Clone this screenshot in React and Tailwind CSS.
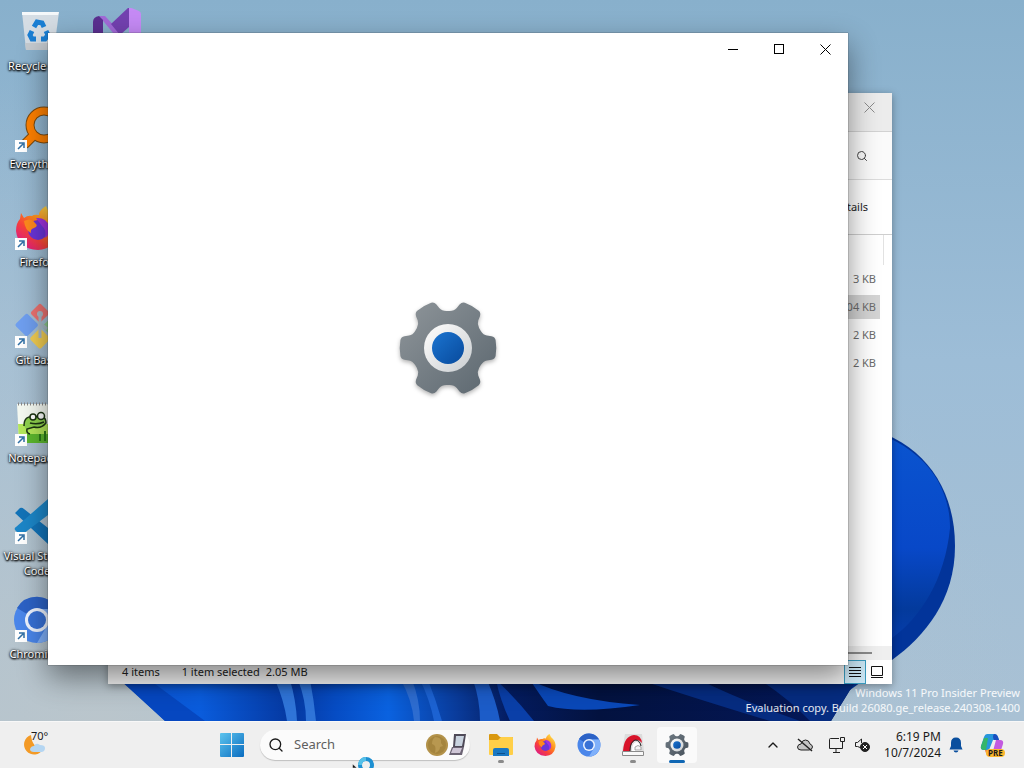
import React from 'react';
import { Search, ChevronUp } from 'lucide-react';

const TOOTH = 'M0 0 L29 -23.7 L32.5 -17.6 Q35 -13.2 39 -12.4 L43.5 -11.8 Q47 -11 47.6 -8 Q49 0 47.6 8 Q47 11 43.5 11.8 L39 12.4 Q35 13.2 32.5 17.6 L29 23.7 Z';

const GearIcon = ({ id, className, dark }) => (
    <svg viewBox="-50 -50 100 100" className={className} aria-hidden="true">
        <defs>
            <linearGradient id={`${id}-body`} x1="0" y1="0" x2="1" y2="1">
                <stop offset="0.1" stopColor={dark ? '#6d7881' : '#8b9297'} />
                <stop offset="0.9" stopColor={dark ? '#4a545e' : '#5f6a72'} />
            </linearGradient>
            <linearGradient id={`${id}-ring`} x1="0" y1="0" x2="1" y2="1">
                <stop offset="0.2" stopColor="#f5f5f5" />
                <stop offset="1" stopColor="#c9cdd0" />
            </linearGradient>
            <linearGradient id={`${id}-dot`} x1="0" y1="0" x2="1" y2="1">
                <stop offset="0" stopColor="#1b74d0" />
                <stop offset="1" stopColor="#084a9c" />
            </linearGradient>
            <clipPath id={`${id}-clip`}>
                {[0, 60, 120, 180, 240, 300].map((angle) => (
                    <path key={angle} d={TOOTH} transform={`rotate(${angle})`} />
                ))}
            </clipPath>
        </defs>
        <rect x="-50" y="-50" width="100" height="100" fill={`url(#${id}-body)`} clipPath={`url(#${id}-clip)`} />
        <circle r={dark ? 27 : 24} fill={`url(#${id}-ring)`} />
        <circle r="16" fill={`url(#${id}-dot)`} />
    </svg>
);

const FirefoxIcon = ({ id, className }) => (
    <svg viewBox="0 0 48 48" className={className} aria-hidden="true">
        <defs>
            <linearGradient id={`${id}-fire`} x1="0.9" y1="0.1" x2="0.2" y2="0.9">
                <stop offset="0" stopColor="#ffe14a" />
                <stop offset="0.4" stopColor="#ff8a1c" />
                <stop offset="0.7" stopColor="#f9423a" />
                <stop offset="1" stopColor="#e01f7c" />
            </linearGradient>
        </defs>
        <path
            d="M8 9 L11 14 Q15 11 19 12 Q21 10 26 11 Q26 6 33 2 Q35 8 40 12 Q46 19 45 28 Q42 45 25 46 Q5 45 3 27 Q3 19 7 15 Z"
            fill={`url(#${id}-fire)`}
        />
        <circle cx="25" cy="26" r="10" fill="#6a35d9" />
        <path d="M11 17 Q18 13 22 19 Q26 22 21 24 Q17 25 18 29 Q12 26 11 17" fill="#ff8a1c" />
        <path d="M23 14 Q33 13 36 22 Q38 30 32 34 Q34 26 29 22 Z" fill="#a032e1" />
    </svg>
);

const ChromiumIcon = ({ className }) => (
    <svg viewBox="0 0 48 48" className={className} aria-hidden="true">
        <circle cx="24" cy="24" r="23" fill="#4a86ea" />
        <path d="M24 24 L4 12 A23 23 0 0 1 44 13 H24 Z" fill="#2c62c6" />
        <path d="M24 13 H44 A23 23 0 0 1 24 47 L34 30 Z" fill="#7fb0fa" />
        <circle cx="24" cy="24" r="12" fill="#eef4ff" />
        <circle cx="24" cy="24" r="9" fill="#3871d6" />
    </svg>
);

const RecycleBinIcon = () => (
    <svg viewBox="0 0 48 48" className="h-12 w-12" aria-hidden="true">
        <path d="M9 4 H46 L41 42 H13 Z" fill="#d5dde4" />
        <path d="M9 4 H46 L45 7 H9 Z" fill="#f5f8fa" />
        <path d="M12 35 H42 L41 42 H13 Z" fill="#c6cbd0" />
        <g fill="none" stroke="#1a7fd4" strokeWidth="5">
            <path d="M21 19 L24 14 L29 15 L31 19" />
            <path d="M33 23 L35 27 L32 31 H28" />
            <path d="M23 31 H19 L17 27 L19 23" />
        </g>
    </svg>
);

const EverythingIcon = () => (
    <svg viewBox="0 0 48 48" className="h-12 w-12" aria-hidden="true">
        <g fill="none" strokeLinecap="round">
            <circle cx="31" cy="19" r="14" stroke="#7a4a10" strokeWidth="9" />
            <path d="M20 30 L12 38" stroke="#7a4a10" strokeWidth="10" />
            <circle cx="31" cy="19" r="14" stroke="#ff8000" strokeWidth="7" />
            <path d="M20 30 L12 38" stroke="#ff8000" strokeWidth="8" />
        </g>
    </svg>
);

const GitIcon = () => (
    <svg viewBox="0 0 48 48" className="h-12 w-12" aria-hidden="true">
        <rect x="5" y="14" width="17" height="17" rx="2" fill="#6f9ff0" transform="rotate(45 13 23)" />
        <rect x="20" y="4" width="14" height="14" rx="2" fill="#ec7270" transform="rotate(45 27 11)" />
        <rect x="20" y="29" width="15" height="15" rx="2" fill="#f1cd52" transform="rotate(45 27 36)" />
        <rect x="32" y="18" width="13" height="13" rx="2" fill="#8cc98c" transform="rotate(45 38 24)" />
        <circle cx="27" cy="12" r="3" fill="#a9b9c6" />
        <path d="M27 14 V36 M28 22 L34 27" stroke="#a9b9c6" strokeWidth="3" />
    </svg>
);

const NotepadIcon = () => (
    <svg viewBox="0 0 48 48" className="h-12 w-12" aria-hidden="true">
        <path d="M4 4 H34 L45 13 V42 H6 Z" fill="#f6faf2" />
        <path d="M5 24 H45 V43 H6 Z" fill="#b4e85a" />
        <path d="M5 34 H45 V43 H6 Z" fill="#5cb82e" />
        <path d="M5 4 H34" stroke="#888" strokeWidth="3" strokeDasharray="1 2" />
        <g fill="#8fd24e" stroke="#1c3312" strokeWidth="1.5">
            <path d="M11 26 Q11 15 21 17 Q33 14 33 23 Q28 29 21 27 L14 29 Q13 33 17 34" />
            <circle cx="20" cy="17" r="3" fill="#fff" />
            <circle cx="28" cy="16" r="3.5" fill="#fff" />
        </g>
        <path d="M17 23 Q24 25 31 22" stroke="#1c3312" strokeWidth="1.5" fill="none" />
        <path d="M27 41 V34 M32 41 V31 M38 41 V34" stroke="#2c7a1a" strokeWidth="2" />
    </svg>
);

const VsCodeIcon = () => (
    <svg viewBox="0 0 48 48" className="h-12 w-12" aria-hidden="true">
        <path d="M2 15 L7 10 Q9 9 11 11 L35 30 V46 Z" fill="#1273b8" />
        <path d="M35 1 V17 L10 36 Q8 37 6 36 L2 32 Q1 30 3 29 Z" fill="#1c86c8" />
        <path d="M35 1 L46 6 V42 L35 46 Z" fill="#3c9fe0" />
    </svg>
);

const VisualStudioIcon = () => (
    <svg viewBox="0 0 48 48" className="h-12 w-12" aria-hidden="true">
        <path d="M6 8 L12 8 L36 34 V44 Z" fill="#a26ad8" />
        <path d="M0 14 Q0 9 6 8 L10 12 V38 L0 34 Z" fill="#5b2f91" />
        <path d="M36 -1 L18 16 L27 27 L36 19 Z" fill="#7341b0" />
        <path d="M36 -1 L46 3 Q48 4 48 6 V42 L36 47 Z" fill="#c58af5" />
    </svg>
);

const DESKTOP_ICONS = [
    { label: 'Recycle Bin', icon: <RecycleBinIcon /> },
    { label: 'Everything', icon: <EverythingIcon />, shortcut: true },
    { label: 'Firefox', icon: <FirefoxIcon id="ff-desk" className="h-12 w-12" />, shortcut: true },
    { label: 'Git Bash', icon: <GitIcon />, shortcut: true },
    { label: 'Notepad++', icon: <NotepadIcon />, shortcut: true },
    { label: 'Visual Studio Code', icon: <VsCodeIcon />, shortcut: true },
    { label: 'Chromium', icon: <ChromiumIcon className="h-12 w-12" />, shortcut: true },
];

const FILE_SIZES = [
    { size: '3 KB' },
    { size: '2,104 KB', selected: true },
    { size: '2 KB' },
    { size: '2 KB' },
];

const Wallpaper = () => (
    <svg
        viewBox="0 0 1024 721"
        preserveAspectRatio="none"
        className="absolute inset-0 h-full w-full"
        aria-hidden="true"
    >
        <defs>
            <linearGradient id="sky" x1="0" y1="0" x2="0" y2="1">
                <stop offset="0" stopColor="#88b0cc" />
                <stop offset="0.5" stopColor="#9dbdd7" />
                <stop offset="1" stopColor="#a9c1d4" />
            </linearGradient>
            <radialGradient id="haze" cx="0.1" cy="1" r="0.9">
                <stop offset="0" stopColor="#bcc6cb" stopOpacity="0.9" />
                <stop offset="0.5" stopColor="#b9c6cd" stopOpacity="0.4" />
                <stop offset="1" stopColor="#b9c6cd" stopOpacity="0" />
            </radialGradient>
            <linearGradient id="petal" x1="0" y1="0" x2="0" y2="1">
                <stop offset="0" stopColor="#0a55d0" />
                <stop offset="0.5" stopColor="#0848c8" />
                <stop offset="0.75" stopColor="#033a9c" />
                <stop offset="1" stopColor="#0a40b8" />
            </linearGradient>
            <linearGradient id="ribbon" x1="0" y1="0" x2="1" y2="0">
                <stop offset="0" stopColor="#0a50d0" />
                <stop offset="0.12" stopColor="#0a5cdc" />
                <stop offset="0.24" stopColor="#0538a0" />
                <stop offset="0.3" stopColor="#064cc4" />
                <stop offset="0.37" stopColor="#0a62e0" />
                <stop offset="0.46" stopColor="#0a3c9c" />
                <stop offset="0.53" stopColor="#041c60" />
                <stop offset="0.65" stopColor="#03123f" />
                <stop offset="1" stopColor="#04185c" />
            </linearGradient>
        </defs>
        <rect width="1024" height="721" fill="url(#sky)" />
        <rect width="1024" height="721" fill="url(#haze)" />
        <path d="M850 424 C915 434 955 480 955 546 C955 600 925 636 892 660 L850 690 Z" fill="#02349a" />
        <path d="M850 426 C915 438 950 478 950 528 C945 580 920 618 892 638 L850 670 Z" fill="url(#petal)" />
        <path d="M110 670 H862 L831 721 H165 Z" fill="url(#ribbon)" />
        <path d="M120 680 L165 721 H205 L155 684 Z" fill="#0647c0" />
        <path d="M275 680 Q284 700 287 721 H297 Q296 700 290 680 Z" fill="#2f74d8" />
        <path d="M298 680 Q306 700 306 721 H316 Q314 700 310 680 Z" fill="#2f74d8" />
        <path d="M401 680 Q412 700 414 721 H420 Q420 700 412 680 Z" fill="#2d6cd0" />
        <path d="M420 680 Q430 700 434 721 H442 Q436 700 428 680 Z" fill="#1c62d2" />
        <path d="M473 680 Q480 700 480 721 H500 Q496 700 487 680 Z" fill="#1c5cc8" />
        <path d="M496 680 Q515 697 534 721 H510 Q500 700 496 680 Z" fill="#0a3fa8" />
        <path d="M530 680 Q570 700 640 705 Q580 714 548 706 Q540 695 530 680 Z" fill="#0a48b8" />
        <path d="M640 680 Q700 700 770 721 H800 Q740 700 700 680 Z" fill="#062c80" />
        <path d="M760 680 Q790 700 810 721 H831 L855 682 Z" fill="#062c80" />
    </svg>
);

const ShortcutArrow = () => (
    <svg viewBox="0 0 12 12" className="absolute bottom-0.5 left-0.5 h-3 w-3 bg-white" aria-hidden="true">
        <path d="M3 9 L8 4 M4 3 H9 V8" fill="none" stroke="#2f6fa5" strokeWidth="1.5" />
    </svg>
);

const DesktopIcon = ({ label, icon, shortcut }) => (
    <li className="flex h-[98px] w-[74px] flex-col items-center pt-2 text-center text-[11px] leading-[15px] text-white [text-shadow:0_1px_2px_#000,0_0_3px_#000,1px_1px_2px_#000]">
        <span className="relative mb-0.5">
            {icon}
            {shortcut && <ShortcutArrow />}
        </span>
        {label}
    </li>
);

const CloseGlyph = () => (
    <svg viewBox="0 0 11 11" className="h-[11px] w-[11px]" aria-hidden="true">
        <path d="M0.5 0.5 L10.5 10.5 M10.5 0.5 L0.5 10.5" stroke="currentColor" fill="none" />
    </svg>
);

const ExplorerWindow = () => (
    <section
        aria-label="File Explorer"
        className="absolute bottom-[37px] left-27 right-33 top-[93px] flex flex-col bg-white text-[11px] text-[#222] shadow-[0_2px_8px_rgba(0,0,0,0.35)]"
    >
        <header className="flex h-[39px] items-start justify-end border-b border-[#d2d2d2] bg-[#ececec]">
            <button aria-label="Close Explorer" className="flex h-7 w-[46px] items-center justify-center text-[#8a8a8a]">
                <CloseGlyph />
            </button>
        </header>
        <div className="flex h-12 items-center justify-end border-b border-[#dcdcdc] bg-[#fafafa] pr-6">
            <Search className="h-3 w-3 text-[#444]" strokeWidth={2} />
        </div>
        <div className="flex h-[55px] items-center justify-end border-b border-[#cfcfcf] pr-6">
            <button>Details</button>
        </div>
        <div className="min-h-0 flex-1 overflow-hidden">
            <div className="mr-2 h-[30px] border-r border-[#e2e2e2]" />
            <table className="w-full border-collapse text-right text-[#6b6b6b]">
                <tbody>
                    {FILE_SIZES.map((file, index) => (
                        <tr key={index} className="h-7">
                            <td className="py-0.5 pr-3">
                                <div className={`h-6 pr-1 leading-6 ${file.selected ? 'bg-[#d4d4d4]' : ''}`}>
                                    {file.size}
                                </div>
                            </td>
                        </tr>
                    ))}
                </tbody>
            </table>
        </div>
        <div className="flex h-[14px] items-center bg-[#efefef] pl-4 pr-5">
            <div className="h-0.5 flex-1 bg-[#8a8a8a]" />
        </div>
        <footer className="flex h-6 items-center bg-[#f3f3f3] pl-[14px]">
            <span>4 items</span>
            <span className="ml-[22px]">1 item selected</span>
            <span className="ml-1.5">2.05 MB</span>
            <button
                aria-label="Details view"
                className="ml-auto flex h-full w-[22px] items-center justify-center border border-[#3a9cc0] bg-[#cce8f6]"
            >
                <svg viewBox="0 0 12 12" className="h-3 w-3" aria-hidden="true">
                    <path d="M0 1.5 H12 M0 4.5 H12 M0 7.5 H12 M0 10.5 H12" stroke="#111" />
                </svg>
            </button>
            <button aria-label="Large icons view" className="flex h-full w-[26px] items-center justify-center bg-white pr-1">
                <svg viewBox="0 0 12 12" className="h-3 w-3" aria-hidden="true">
                    <path d="M0.5 0.5 H11.5 V9.5 H0.5 Z M0 11.5 H12" stroke="#111" fill="none" />
                </svg>
            </button>
        </footer>
    </section>
);

const SettingsWindow = () => (
    <section
        aria-label="Settings"
        className="absolute bottom-14 left-12 right-44 top-[33px] flex flex-col bg-white shadow-[0_0_1px_#333,0_12px_28px_rgba(0,0,0,0.45)]"
    >
        <header className="flex h-8 justify-end text-black">
            <button aria-label="Minimize" className="flex w-[46px] items-center justify-center">
                <span className="h-px w-2.5 bg-black" />
            </button>
            <button aria-label="Maximize" className="flex w-[46px] items-center justify-center">
                <span className="h-2.5 w-2.5 border border-black" />
            </button>
            <button aria-label="Close" className="flex w-[46px] items-center justify-center">
                <CloseGlyph />
            </button>
        </header>
        <div className="flex flex-1 items-center justify-center pb-[34px]">
            <GearIcon id="gear-splash" className="h-[100px] w-[100px] drop-shadow-[0_2px_2px_rgba(0,0,0,0.3)]" />
        </div>
    </section>
);

const WindowsLogo = () => (
    <svg viewBox="0 0 24 24" className="h-6 w-6" aria-hidden="true">
        <defs>
            <linearGradient id="win" x1="0" y1="0" x2="24" y2="24" gradientUnits="userSpaceOnUse">
                <stop offset="0" stopColor="#5cc4ee" />
                <stop offset="1" stopColor="#0a6cc0" />
            </linearGradient>
        </defs>
        <path d="M0 1 Q0 0 1 0 H11 V11 H0 Z M12 0 H23 Q24 0 24 1 V11 H12 Z M0 12 H11 V24 H1 Q0 24 0 23 Z M12 12 H24 V23 Q24 24 23 24 H12 Z" fill="url(#win)" />
    </svg>
);

const FolderIcon = () => (
    <svg viewBox="0 0 24 24" className="h-6 w-6" aria-hidden="true">
        <path d="M0 2 Q0 1 1 1 H8 L11 4 H23 Q24 4 24 5 V8 H0 Z" fill="#d9980f" />
        <path d="M0 7 H9 L12 4 H23 Q24 4 24 5 V21 Q24 22 23 22 H1 Q0 22 0 21 Z" fill="#ffcf48" />
        <path d="M4 23 V17 Q4 15 6 15 H18 Q20 15 20 17 V23 Z" fill="#1a78c2" />
        <path d="M8 20 H16 V21 H8 Z" fill="#0c4f8c" />
    </svg>
);

const RedToolIcon = () => (
    <svg viewBox="0 0 24 24" className="h-6 w-6" aria-hidden="true">
        <path d="M4 1 H21 L23 18 H1 Z" fill="#dcdcdc" />
        <path d="M1.5 18.5 H22.5 V22.5 H1.5 Z" fill="#f8f8f8" stroke="#8a8a8a" />
        <path d="M2 18 Q3 3 13 2 Q20 2 21 10 Q17 5 13 8 Q9 11 9 18 Z" fill="#d8132a" />
        <path d="M9 18 Q9 9 14 7 Q19 7 20 13" stroke="#222" strokeWidth="1" fill="none" />
        <path d="M11 18 Q11 10 15 9 Q18 9 19 13 L20 18 Z" fill="#fff" />
        <path d="M14 17 V14 Q17 11 20 14 V17 Z" fill="#f4f4f4" stroke="#888" strokeWidth="0.7" />
    </svg>
);

const WeatherIcon = () => (
    <svg viewBox="0 0 24 24" className="h-6 w-6" aria-hidden="true">
        <path d="M9 2 A10 10 0 1 0 21 16 Q10 15 9 2" fill="#f39a26" />
        <path d="M12 19 Q8 19 8 16 Q9 13 12 13 Q14 9 18 12 Q23 12 23 15 Q23 19 19 19 Z" fill="#b5d6f2" />
    </svg>
);

const CoinArt = () => (
    <svg viewBox="0 0 42 24" className="h-6 w-[42px]" aria-hidden="true">
        <circle cx="11" cy="12" r="11" fill="#b3924a" />
        <circle cx="11" cy="12" r="9" fill="#a5853e" />
        <path d="M9 4 Q16 4 15 10 L17 13 L14 14 Q14 18 9 20 Q11 12 6 11 Q6 6 9 4" fill="#b89850" />
        <path d="M28 1 H40 L38 14 H27 Z" fill="#4f4a58" />
        <path d="M30 3 H38 L36 13 H29 Z" fill="#c9d3df" />
        <path d="M26 14 H38 L36 22 H23 Z" fill="#6c6474" />
        <path d="M27 15 H36 L34 20 H25 Z" fill="#cfc6d6" />
    </svg>
);

const CopilotIcon = () => (
    <svg viewBox="0 0 24 24" className="h-6 w-6" aria-hidden="true">
        <path d="M7 1 H15 Q17 1 18 4 L19 7 H13 L9 17 H4 Q0 17 1 13 L4 4 Q5 1 7 1" fill="#2796dc" />
        <path d="M4 5 L8 5 L6 17 H4 Q0 17 1 13 Z" fill="#35b56a" />
        <path d="M14 1 Q17 1 18 4 L19 7 H14 Q12 3 14 1" fill="#1a4fc0" />
        <path d="M16 7 H20 Q24 7 23 11 L20 20 Q19 23 16 23 H9 Q12 22 13 18 Z" fill="#c35be0" />
        <path d="M5 17 H13 Q12 23 9 23 Q6 22 5 17" fill="#f07a4a" />
    </svg>
);

const PINNED_APPS = [
    { label: 'File Explorer', icon: <FolderIcon />, running: true },
    { label: 'Firefox', icon: <FirefoxIcon id="ff-bar" className="h-6 w-6" /> },
    { label: 'Chromium', icon: <ChromiumIcon className="h-6 w-6" /> },
    { label: 'Tool', icon: <RedToolIcon />, running: true },
    { label: 'Settings', icon: <GearIcon id="gear-bar" className="h-6 w-6" dark />, active: true },
];

const TrayIcons = () => (
    <>
        <button aria-label="Show hidden icons" className="flex h-8 w-8 items-center justify-center">
            <ChevronUp className="h-4 w-4" strokeWidth={2} />
        </button>
        <button aria-label="OneDrive" className="flex h-8 w-8 items-center justify-center">
            <svg viewBox="0 0 16 14" className="h-[14px] w-4" fill="none" stroke="#222" aria-hidden="true">
                <path d="M4 12 Q0.5 12 0.5 9 Q1 6 4 6 Q5 2 8.5 2 Q12 2 13 6 Q15.5 7 15.5 9 Q15 12 12 12 Z" fill="#c4c4c4" />
                <path d="M1 1 L15 13" strokeWidth="1.5" />
            </svg>
        </button>
        <button aria-label="Network and volume" className="flex h-8 w-14 items-center justify-center gap-2">
            <svg viewBox="0 0 18 18" className="h-[18px] w-[18px]" fill="none" stroke="#222" aria-hidden="true">
                <path d="M11 2.5 H2.5 Q1.5 2.5 1.5 3.5 V12.5 H14.5 V8 M8 12.5 V16 M5 16.5 H12" />
                <path d="M12.5 1.5 H16.5 V5.5 H12.5 Z M14.5 5.5 V9" />
            </svg>
            <svg viewBox="0 0 16 16" className="h-4 w-4" fill="none" stroke="#222" aria-hidden="true">
                <path d="M7.5 11 L3.5 9.5 H1.5 V5.5 H3.5 L7.5 2 V6" />
                <circle cx="11" cy="10" r="4.5" fill="#222" />
                <path d="M9 8 L13 12 M13 8 L9 12" stroke="#fff" />
            </svg>
        </button>
    </>
);

const Taskbar = () => (
    <footer className="relative z-10 flex h-[47px] shrink-0 items-center border-t border-[#f8f8f8] bg-[#efefef] text-[11px] text-[#1a1a1a]">
        <button aria-label="Weather, 70 degrees" className="ml-[22px] flex w-[190px] items-center">
            <WeatherIcon />
            <span className="-ml-[15px] mb-[18px]">70°</span>
        </button>
        <button aria-label="Start" className="flex h-10 w-10 items-center justify-center">
            <WindowsLogo />
        </button>
        <label className="ml-2 flex h-[30px] w-[210px] shrink-0 items-center rounded-full bg-[#fbfbfb] pl-2 pr-0.5 shadow-[0_1px_1px_rgba(0,0,0,0.2)]">
            <Search className="h-4 w-4 shrink-0" strokeWidth={2} />
            <input
                type="text"
                aria-label="Search"
                placeholder="Search"
                className="ml-2.5 min-w-0 flex-1 bg-transparent text-[13px] outline-none placeholder:text-[#5f5f5f]"
            />
            <CoinArt />
        </label>
        <nav aria-label="Pinned apps" className="ml-[11px] flex gap-1">
            {PINNED_APPS.map((app) => (
                <button
                    key={app.label}
                    aria-label={app.label}
                    className={`relative flex h-9 w-10 items-center justify-center rounded ${
                        app.active ? 'bg-[#fafafa]' : ''
                    }`}
                >
                    {app.icon}
                    {app.active && <span className="absolute bottom-0 h-[3px] w-4 rounded-full bg-[#1067b4]" />}
                    {app.running && <span className="absolute bottom-0 h-[3px] w-1.5 rounded-full bg-[#8a8a8a]" />}
                </button>
            ))}
        </nav>
        <div className="ml-auto flex items-center pr-5">
            <TrayIcons />
            <button className="w-16 text-right text-[12px] leading-4">
                <div>6:19 PM</div>
                <div>10/7/2024</div>
            </button>
            <button aria-label="Notifications" className="ml-[7px] flex w-4 justify-center">
                <svg viewBox="0 0 14 16" className="h-4 w-[14px]" aria-hidden="true">
                    <path d="M7 0.5 Q12 0.5 12 6 V9 L13.5 12.5 H0.5 L2 9 V6 Q2 0.5 7 0.5 M4.5 13.5 H9.5 Q9 15.5 7 15.5 Q5 15.5 4.5 13.5" fill="#0a4f9e" />
                </svg>
            </button>
            <button aria-label="Copilot preview" className="relative ml-4">
                <CopilotIcon />
                <span className="absolute bottom-0 left-1.5 rounded-sm bg-[#fbb62c] px-0.5 text-[8px] font-bold leading-[8px]">
                    PRE
                </span>
            </button>
        </div>
    </footer>
);

// Busy pointer, mostly cut off by the bottom edge of the screen
const BusyCursor = () => (
    <svg
        viewBox="0 0 24 12"
        className="pointer-events-none absolute bottom-0 left-[351px] z-20 h-3 w-6"
        aria-hidden="true"
    >
        <path d="M1.5 8 L6 12 H1.5 Z" fill="#111" stroke="#fff" strokeWidth="0.5" />
        <circle cx="15" cy="9" r="6" fill="none" stroke="#1e90d2" strokeWidth="4" />
        <path d="M9 9 A6 6 0 0 1 15 3" fill="none" stroke="#55c0e8" strokeWidth="4" />
    </svg>
);

export default function App() {
    return (
        <div className="relative flex h-screen flex-col overflow-hidden font-['Noto_Sans','Open_Sans',sans-serif]">
            <main className="relative min-h-0 flex-1">
                <Wallpaper />

                {/* Desktop icons */}
                <div className="relative flex gap-1.5">
                    <ul>
                        {DESKTOP_ICONS.map((item) => (
                            <DesktopIcon key={item.label} {...item} />
                        ))}
                    </ul>
                    <ul>
                        <DesktopIcon label="Visual Studio" icon={<VisualStudioIcon />} />
                    </ul>
                </div>

                {/* Watermark */}
                <div className="absolute bottom-1.5 right-1 text-right text-[11px] leading-[15px] text-white/90">
                    <p>Windows 11 Pro Insider Preview</p>
                    <p>Evaluation copy. Build 26080.ge_release.240308-1400</p>
                </div>

                <ExplorerWindow />
                <SettingsWindow />
            </main>
            <Taskbar />
            <BusyCursor />
        </div>
    );
}
